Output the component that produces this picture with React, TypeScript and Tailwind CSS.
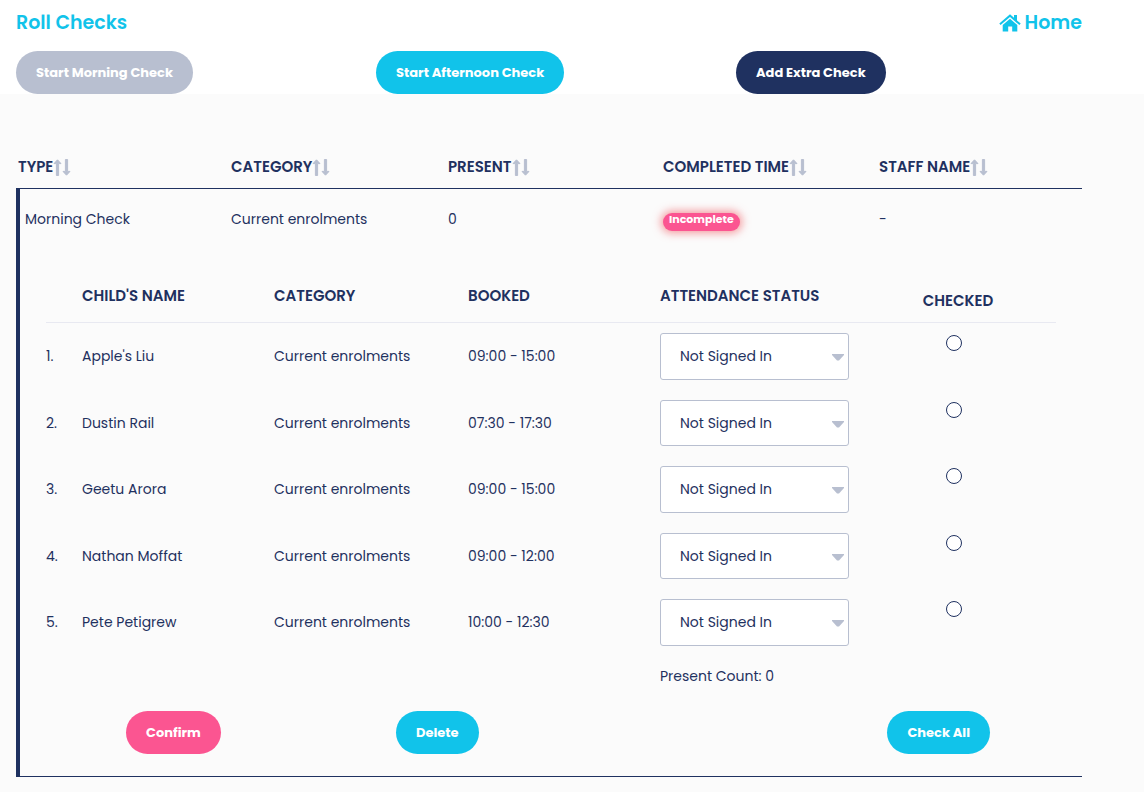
import { useState } from "react";

const CHILDREN = [
  { name: "Apple's Liu", category: "Current enrolments", booked: "09:00 - 15:00" },
  { name: "Dustin Rail", category: "Current enrolments", booked: "07:30 - 17:30" },
  { name: "Geetu Arora", category: "Current enrolments", booked: "09:00 - 15:00" },
  { name: "Nathan Moffat", category: "Current enrolments", booked: "09:00 - 12:00" },
  { name: "Pete Petigrew", category: "Current enrolments", booked: "10:00 - 12:30" },
];

const COLUMNS = ["TYPE", "CATEGORY", "PRESENT", "COMPLETED TIME", "STAFF NAME"];

const BUTTON = "h-[43px] rounded-full px-5 text-[13px] leading-5 font-bold text-white whitespace-nowrap";

function HomeIcon() {
  return (
    <svg width="22" height="18" viewBox="0 0 22 18" fill="currentColor" aria-hidden="true">
      <path d="M11 0.3 15 3.8V1h3v5.4l3.7 3.2-1.3 1.5L11 2.9 1.6 11.1.3 9.6z" />
      <path d="M11 4.7 18.3 11V17.4H13.2V12.4H9.2V17.4H3.7V11z" />
    </svg>
  );
}

function SortIcon() {
  return (
    <svg
      className="shrink-0"
      width="18"
      height="17"
      viewBox="0 0 18 17"
      fill="#b8bfd0"
      stroke="#b8bfd0"
      strokeLinejoin="round"
      aria-hidden="true"
    >
      <path d="M4.5 0.8 8 4.6H5.6V16.5H3.4V4.6H1z" />
      <path d="M13.5 16.2 17 12.4h-2.4V.5h-2.2v11.9H10z" />
    </svg>
  );
}

function StatusSelect({ label }: { label: string }) {
  return (
    <div className="relative w-[189px]">
      <select
        aria-label={label}
        className="block h-[47px] w-full appearance-none rounded-[3px] border border-[#b8bfd0] bg-white pb-px pl-[19px] group-even:h-[46px]"
      >
        <option>Not Signed In</option>
        <option>Signed In</option>
      </select>
      <svg className="pointer-events-none absolute right-[5px] top-[21px]" width="12" height="7" viewBox="0 0 12 7" fill="#b8bfd0" aria-hidden="true">
        <path d="M0 0h12v1L7 6.5H5L0 1z" />
      </svg>
    </div>
  );
}

export default function App() {
  const [checked, setChecked] = useState<number[]>([]);

  return (
    <div className="min-h-screen bg-[#fbfbfb] font-['Poppins','Inter',sans-serif] text-[14px] leading-6 text-[#1f3160]">
      <header className="bg-white pl-4 pr-12">
        <div className="flex items-center justify-between pt-2 pr-[14px] text-[19px] leading-[30px] font-semibold text-[#11c3ea]">
          <h1>Roll Checks</h1>
          <a href="#home" className="flex items-center gap-1">
            <HomeIcon />
            Home
          </a>
        </div>
        <div className="grid grid-cols-3 pt-[13px]">
          <div>
            <button disabled className={`${BUTTON} bg-[#b8bfd0]`}>Start Morning Check</button>
          </div>
          <div>
            <button className={`${BUTTON} bg-[#11c3ea]`}>Start Afternoon Check</button>
          </div>
          <div>
            <button className={`${BUTTON} bg-[#1f3160]`}>Add Extra Check</button>
          </div>
        </div>
      </header>

      <main className="pl-4 pr-[62px] pt-[52px]">
        <table className="w-full table-fixed border-separate border-spacing-0 text-left">
          <colgroup>
            <col className="w-[213px]" />
            <col className="w-[217px]" />
            <col className="w-[215px]" />
            <col className="w-[216px]" />
            <col className="w-[205px]" />
          </colgroup>
          <thead>
            <tr>
              {COLUMNS.map((title) => (
                <th key={title} className="h-[43px] border-b border-[#1f3160] px-[2px] text-[15px] font-semibold">
                  <span className="flex items-center">
                    {title}
                    <SortIcon />
                  </span>
                </th>
              ))}
            </tr>
          </thead>
          <tbody>
            <tr className="h-[60px]">
              <td className="border-l-4 border-[#1f3160] pl-[5px]">Morning Check</td>
              <td className="px-[2px]">Current enrolments</td>
              <td className="px-[2px]">0</td>
              <td className="px-[2px]">
                <span className="mt-[5px] block h-[18px] w-fit rounded-full bg-[#fb5591] px-[6px] text-[11px] leading-[13px] font-bold text-white shadow-[0_0_8px_2px_#f0555c99]">
                  Incomplete
                </span>
              </td>
              <td className="px-[2px]">-</td>
            </tr>
            <tr>
              <td colSpan={5} className="border-b border-l-4 border-[#1f3160] px-[26px] py-[22px]">
                <table className="w-full table-fixed border-separate border-spacing-0">
                  <colgroup>
                    <col className="w-[36px]" />
                    <col className="w-[192px]" />
                    <col className="w-[194px]" />
                    <col className="w-[192px]" />
                    <col className="w-[200px]" />
                    <col className="w-[196px]" />
                  </colgroup>
                  <thead>
                    <tr className="text-[15px] [&>th]:h-[52px] [&>th]:border-b [&>th]:border-[#e8e9f1] [&>th]:pb-[2px] [&>th]:font-semibold">
                      <th />
                      <th>CHILD'S NAME</th>
                      <th>CATEGORY</th>
                      <th>BOOKED</th>
                      <th>ATTENDANCE STATUS</th>
                      <th className="pt-[10px] text-center">CHECKED</th>
                    </tr>
                  </thead>
                  <tbody>
                    {CHILDREN.map((child, i) => (
                      <tr key={child.name} className="group">
                        <td className="pb-px">{i + 1}.</td>
                        <td className="pb-px">{child.name}</td>
                        <td className="pb-px">{child.category}</td>
                        <td className="pb-px">{child.booked}</td>
                        <td className="py-[10px]">
                          <StatusSelect label={`Attendance status for ${child.name}`} />
                        </td>
                        <td className="pt-3 pr-2 text-center align-top">
                          <input
                            type="radio"
                            aria-label={`${child.name} checked`}
                            checked={checked.includes(i)}
                            onChange={() => setChecked([...checked, i])}
                            className="mx-auto block size-4 appearance-none rounded-full border border-[#1f3160] bg-white checked:bg-[#1f3160]"
                          />
                        </td>
                      </tr>
                    ))}
                    <tr>
                      <td colSpan={4} />
                      <td colSpan={2} className="pt-2">Present Count: {checked.length}</td>
                    </tr>
                  </tbody>
                </table>

                <div className="flex pt-[23px] pr-[66px] pl-20">
                  <div className="w-[270px]">
                    <button className={`${BUTTON} bg-[#fb5591]`}>Confirm</button>
                  </div>
                  <button className={`${BUTTON} bg-[#11c3ea]`}>Delete</button>
                  <button
                    className={`${BUTTON} ml-auto bg-[#11c3ea]`}
                    onClick={() => setChecked(CHILDREN.map((_, i) => i))}
                  >
                    Check All
                  </button>
                </div>
              </td>
            </tr>
          </tbody>
        </table>
      </main>
    </div>
  );
}
